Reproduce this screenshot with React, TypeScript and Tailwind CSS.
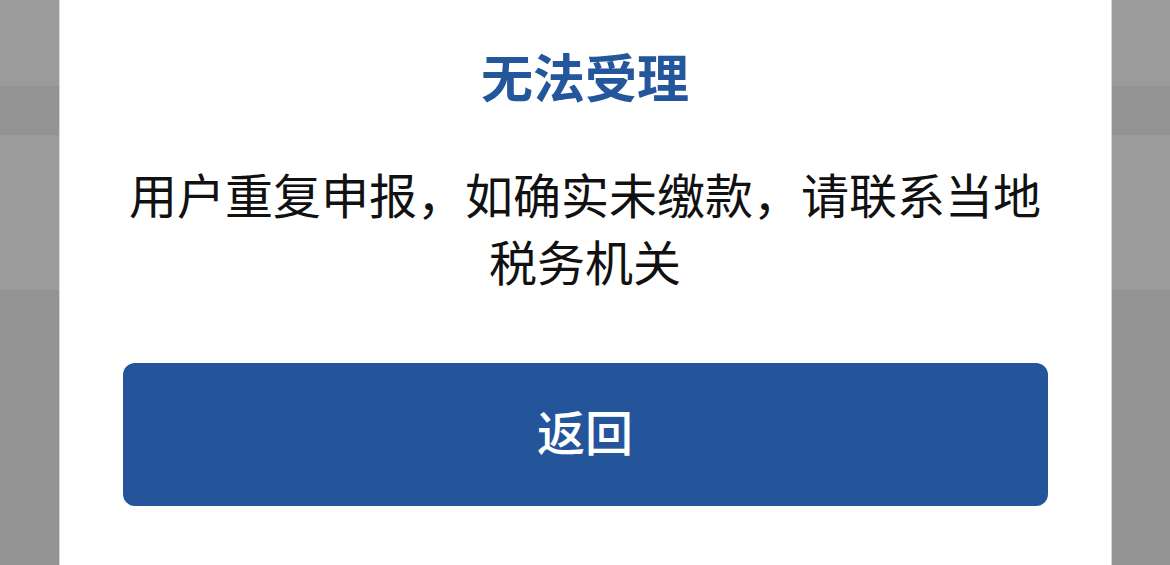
import React from "react";

export default function App() {
  return (
    <div
      className="relative h-[565px] w-[1170px] overflow-hidden bg-[#9b9b9b]"
      style={{ fontFamily: '"Noto Sans CJK SC", "Noto Sans", sans-serif' }}
    >
      {/* page behind the mask */}
      <div className="h-[86px] bg-[#9b9b9b]" />
      <div className="h-[49px] bg-[#939393]" />
      <div className="h-[155px] bg-[#9b9b9b]" />
      <div className="h-[275px] bg-[#939393]" />

      {/* dialog */}
      <div className="absolute inset-x-0 top-0 flex justify-center">
        <div className="w-[1053px] bg-white px-[63px] pt-[40px] pb-[60px] border-x border-[#d6d6d6]">
          <h2 className="text-center text-[52px] font-bold leading-[72px] text-[#23569b]">
            无法受理
          </h2>
          <p className="mt-[48px] text-center text-[48px] leading-[67px] text-[#111111]">
            用户重复申报，如确实未缴款，请联系当地税务机关
          </p>
          <button className="mt-[69px] flex h-[143px] w-full items-center justify-center rounded-[12px] bg-[#24559b] pb-[10px] text-[48px] font-medium text-white">
            返回
          </button>
        </div>
      </div>
    </div>
  );
}
